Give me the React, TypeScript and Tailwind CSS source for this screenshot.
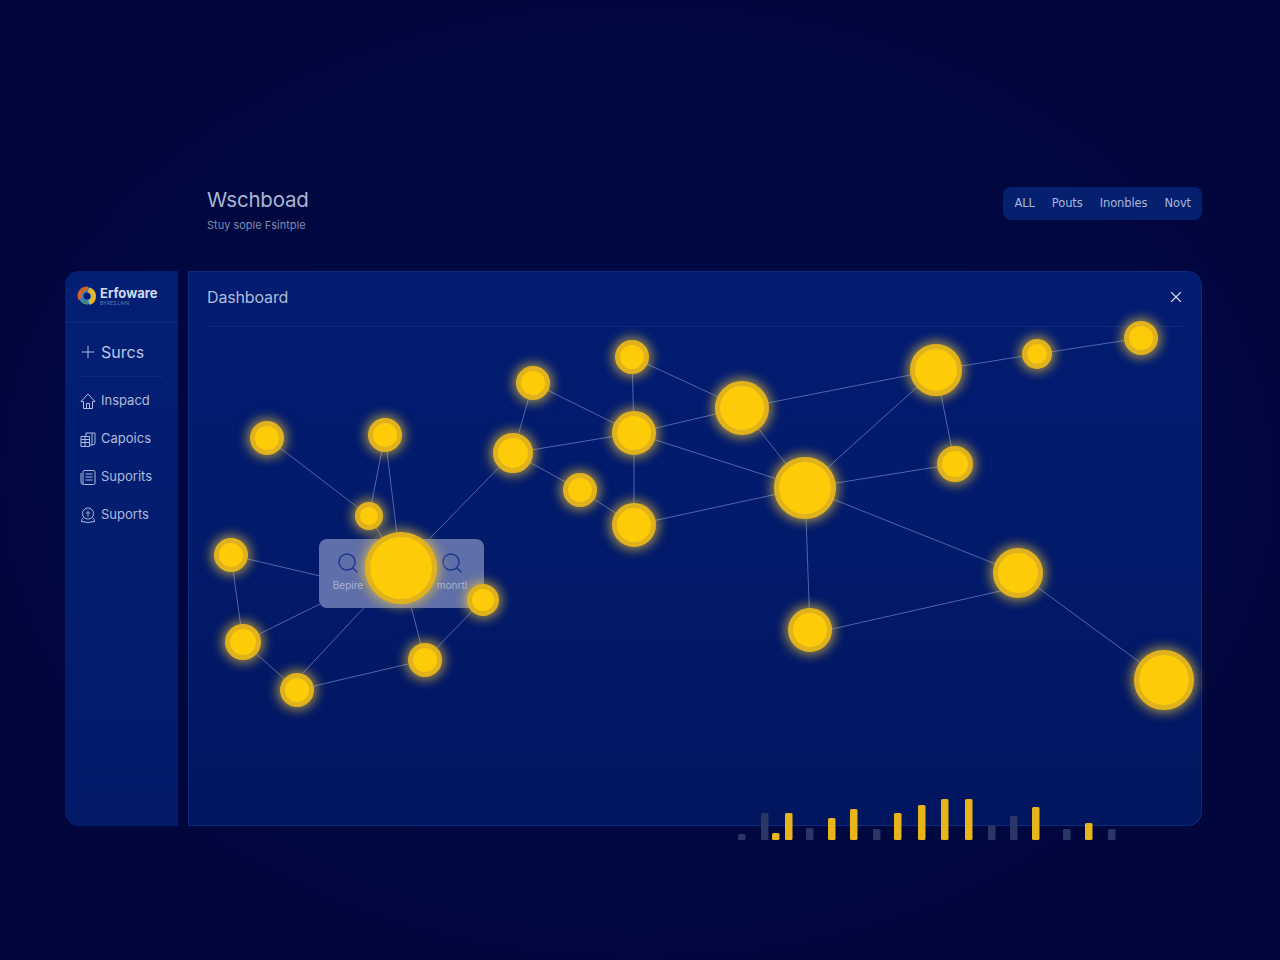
import * as React from 'react';
import { Plus, X, Search } from 'lucide-react';

// graph coordinates are relative to the main panel's padding box
const OX = 189;
const OY = 272;

const NODES: [number, number, number][] = [
    [267, 438, 17], [385, 435, 17], [369, 516, 14], [231, 555, 17], [483, 600, 16],
    [243, 642, 18], [425, 660, 17], [297, 690, 17], [513, 453, 20], [533, 383, 17],
    [632, 357, 17], [634, 433, 22], [580, 490, 17], [634, 525, 22], [742, 408, 27],
    [805, 488, 31], [936, 370, 26], [1037, 354, 15], [1141, 338, 17], [955, 464, 18],
    [1018, 573, 25], [810, 630, 22], [1164, 680, 30], [401, 568, 36],
];

const EDGES: [number, number, number, number][] = [
    [267, 438, 369, 516], [385, 435, 369, 516], [385, 435, 401, 568], [369, 516, 401, 568],
    [231, 555, 320, 576], [231, 555, 243, 642], [243, 642, 320, 604], [243, 642, 297, 690],
    [303, 673, 373, 598], [297, 690, 425, 660], [425, 660, 401, 568], [425, 660, 483, 600],
    [401, 568, 513, 453], [513, 453, 533, 383], [513, 453, 634, 433], [533, 383, 634, 433],
    [632, 357, 634, 433], [634, 433, 634, 525], [513, 453, 580, 490], [580, 490, 634, 525],
    [632, 357, 742, 408], [634, 433, 742, 408], [634, 433, 805, 488], [742, 408, 805, 488],
    [634, 525, 805, 488], [805, 488, 936, 370], [742, 408, 936, 370], [936, 370, 1037, 354],
    [1037, 354, 1141, 338], [936, 370, 955, 464], [805, 488, 955, 464], [805, 488, 1018, 573],
    [805, 488, 810, 630], [810, 634, 1018, 587], [1018, 573, 1164, 680],
];

// x, top, gold?
const BARS: [number, number, boolean][] = [
    [738, 834, false], [761, 813, false], [772, 833, true], [785, 813, true], [806, 828, false],
    [828, 818, true], [850, 809, true], [873, 829, false], [894, 813, true], [918, 805, true],
    [941, 799, true], [965, 799, true], [988, 825, false], [1010, 816, false], [1032, 807, true],
    [1063, 829, false], [1085, 823, true], [1108, 829, false],
];

const HomeIcon = () => (
    <svg width="16" height="17" viewBox="0 0 16 17" fill="none" stroke="currentColor" strokeWidth="1" strokeLinejoin="round">
        <path d="M8 1 L15 8.5 H12.5 V15.5 H3.5 V8.5 H1 Z" />
        <path d="M6.5 15.5 V10.5 H9.5 V15.5" />
    </svg>
);

const PagesIcon = () => (
    <svg width="16" height="17" viewBox="0 0 16 17" fill="none" stroke="currentColor" strokeWidth="1" strokeLinejoin="round">
        <path d="M1 5.5 H9.5 V15.5 H1 Z" />
        <path d="M1 8.5 H9.5 M1 11.5 H9.5 M5 5.5 V15.5" />
        <path d="M6 5.5 V2 H15 V12 Q15 14 12.5 14 H9.5" />
        <path d="M12 2 V14" />
    </svg>
);

const ListIcon = () => (
    <svg width="16" height="17" viewBox="0 0 16 17" fill="none" stroke="currentColor" strokeWidth="1" strokeLinejoin="round">
        <rect x="3" y="1.5" width="12" height="14" rx="1.5" />
        <path d="M1 4 V13 Q1 15.5 3.5 15.5" />
        <path d="M5.5 5 H12.5 M5.5 8 H12.5 M5.5 11 H12.5" />
    </svg>
);

const SupportIcon = () => (
    <svg width="16" height="17" viewBox="0 0 16 17" fill="none" stroke="currentColor" strokeWidth="1" strokeLinejoin="round">
        <circle cx="8" cy="6.5" r="5.5" />
        <path d="M8 9.5 V5 M6 6.5 L8 4.5 L10 6.5" />
        <path d="M3.5 10.5 Q1 12.5 1.5 14.5 Q8 16.5 14.5 14.5 Q15 12.5 12.5 10.5" />
    </svg>
);

const NAV = [
    { label: 'Inspacd', icon: HomeIcon },
    { label: 'Capoics', icon: PagesIcon },
    { label: 'Suporits', icon: ListIcon },
    { label: 'Suports', icon: SupportIcon },
];

const Logo: React.FC = () => (
    <svg width="20" height="20" viewBox="0 0 20 20" fill="none">
        <circle cx="10" cy="10" r="6" stroke="#2f7fd0" strokeWidth="5" />
        <path d="M3.5 13 A7 7 0 0 1 11 3" stroke="#c9662e" strokeWidth="4.5" />
        <path d="M11.5 4 A6.5 6.5 0 0 1 12 16.5" stroke="#e9b527" strokeWidth="5" />
        <path d="M5 15 A7 7 0 0 0 10 17" stroke="#3f8d6e" strokeWidth="3" />
    </svg>
);

const Node: React.FC<{ x: number; y: number; r: number }> = ({ x, y, r }) => (
    <div
        className="absolute rounded-full bg-[#fdcb08] border-[5px] border-[#e0b31e] blur-[0.7px] shadow-[0_0_11px_3px_rgba(255,210,50,0.6)]"
        style={{ left: x - OX - r, top: y - OY - r, width: r * 2, height: r * 2 }}
    />
);

const App: React.FC = () => (
    <div className="relative w-[1280px] h-[960px] overflow-hidden bg-[radial-gradient(ellipse_at_center,#010a48_0%,#01073e_70%,#01053a_100%)] pt-[187px] pl-[65px] pr-[78px] font-['Inter','Noto_Sans',sans-serif]">
        <header className="flex items-start justify-between h-[84px] pl-[142px]">
            <div>
                <h1 className="text-[20.5px] leading-[26px] text-[#aab5d4] tracking-[-0.2px]">Wschboad</h1>
                <p className="mt-[5px] text-[11px] leading-[14px] text-[#7f8cb4]">Stuy sople Fsintple</p>
            </div>
            <div className="flex items-center gap-[17px] h-[33px] px-[11px] pt-[1px] rounded-lg bg-[#04206f] text-[11.5px] text-[#aab6d8] font-['DejaVu_Sans',sans-serif] tracking-[-0.1px]">
                <span>ALL</span>
                <span>Pouts</span>
                <span>Inonbles</span>
                <span>Novt</span>
            </div>
        </header>

        <div className="flex gap-[10px] h-[555px]">
            <aside className="w-[113px] shrink-0 rounded-l-[14px] bg-gradient-to-b from-[#031f74] to-[#021a68] px-[15px] flex flex-col">
                <div className="h-[52px] flex items-center gap-[2px] border-b border-[#0a2a7c] -mx-[15px] pl-[12px] pb-[2px]">
                    <Logo />
                    <div className="ml-[1px]">
                        <div className="text-[13px] leading-[14px] font-bold text-[#d0d9ee]">Erfoware</div>
                        <div className="text-[5px] leading-[6px] text-[#5c77b8]">BYRES.LAIN</div>
                    </div>
                </div>
                <div className="h-[54px] flex items-center gap-[3px] pt-[4px] border-b border-[#0a2a7c] text-[16px] text-[#bcc8e4]">
                    <Plus size={20} strokeWidth={1.1} className="-ml-[2px]" />
                    <span>Surcs</span>
                </div>
                <nav className="mt-[5px] flex flex-col">
                    {NAV.map(({ label, icon: Icon }) => (
                        <div key={label} className="h-[38px] flex items-center gap-[5px] text-[13px] text-[#aebbdc]">
                            <Icon />
                            <span>{label}</span>
                        </div>
                    ))}
                </nav>
            </aside>

            <main className="relative flex-1 rounded-r-[14px] border border-[#0a2a80] bg-[linear-gradient(180deg,#021c72_0%,#021a69_55%,#021660_100%)]">
                <div className="mx-[18px] h-[55px] flex items-center justify-between pb-[4px] border-b border-[#0a2a7c] text-[#b0bbd8]">
                    <span className="text-[16px] tracking-[-0.15px]">Dashboard</span>
                    <X size={18} strokeWidth={1.5} className="text-[#d5def2] -mr-[2px]" />
                </div>

                <svg className="absolute left-0 top-0" width="1012" height="553" fill="none">
                    {EDGES.map(([x1, y1, x2, y2], i) => (
                        <line key={i} x1={x1 - OX} y1={y1 - OY} x2={x2 - OX} y2={y2 - OY} stroke="#4f66ac" strokeWidth="1" />
                    ))}
                </svg>

                <div className="absolute left-[130px] top-[267px] w-[165px] h-[69px] rounded-lg bg-[#5f6fa9] flex justify-between pl-[13px] pr-[16px] pt-[12px]">
                    {['Bepire', 'monrtl'].map(t => (
                        <div key={t} className="w-[32px] flex flex-col items-center">
                            <Search size={24} strokeWidth={1.5} className="text-[#1c3590]" />
                            <span className="mt-[4px] text-[10px] leading-[12px] text-[#a7b2d6]">{t}</span>
                        </div>
                    ))}
                </div>

                {NODES.map(([x, y, r]) => (
                    <Node key={`${x}-${y}`} x={x} y={y} r={r} />
                ))}

                {/* bar strip hangs over the panel's bottom edge */}
                <svg className="absolute left-0 top-0 overflow-visible" width="1012" height="553">
                    {BARS.map(([x, top, gold]) => (
                        <rect
                            key={x}
                            x={x - OX}
                            y={top - OY}
                            width="7.5"
                            height={840 - top}
                            rx="1.5"
                            fill={gold ? '#e8b41c' : '#2a3665'}
                        />
                    ))}
                </svg>
            </main>
        </div>
    </div>
);

export default App;
